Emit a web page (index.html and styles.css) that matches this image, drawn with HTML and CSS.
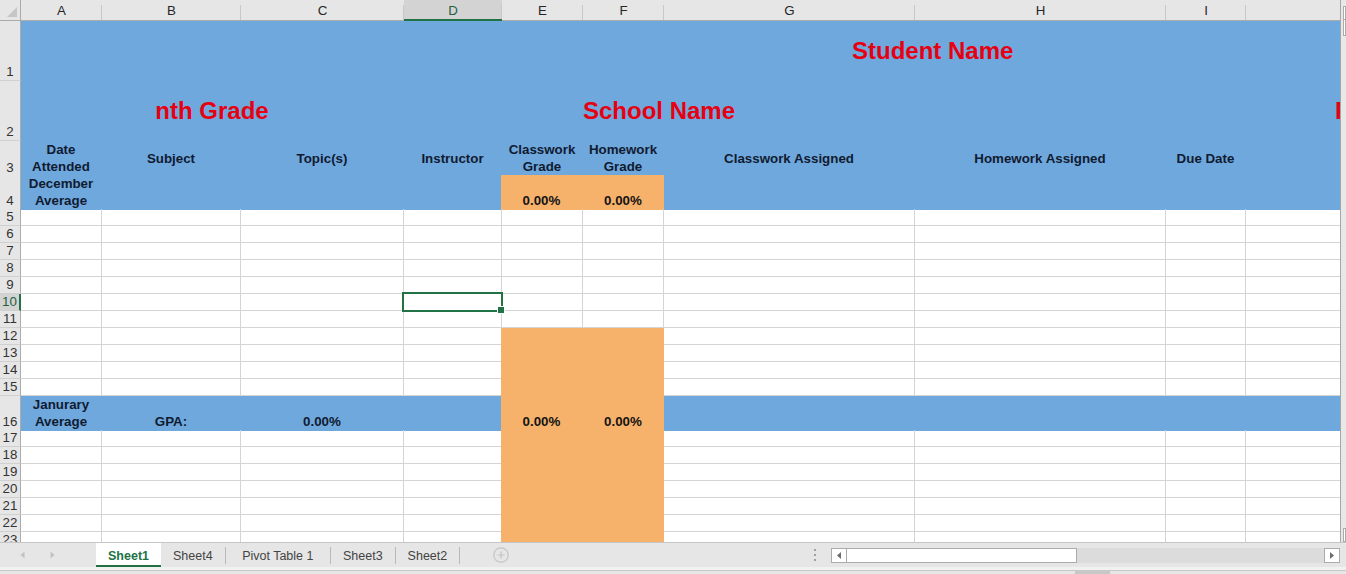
FILE: index.html
```html
<!DOCTYPE html>
<html>
<head>
<meta charset="utf-8">
<title>Sheet1</title>
<link rel="stylesheet" href="styles.css">
</head>
<body>
<div class="app">
  <div class="main">
    <div class="sheet">
      <div class="row h21">
        <div class="corner"></div>
        <div class="ch">A</div><div class="ch">B</div><div class="ch">C</div><div class="ch act">D</div><div class="ch">E</div><div class="ch">F</div><div class="ch">G</div><div class="ch">H</div><div class="ch">I</div><div class="ch"></div>
      </div>
      <div class="row h60">
        <div class="rh">1</div>
        <div class="c b all ttl pl">Student Name</div>
      </div>
      <div class="row h60">
        <div class="rh">2</div>
        <div class="c b s3 ttl">nth Grade</div>
        <div class="c b s4 ttl">School Name</div>
        <div class="c b s3 ttl pr">Period</div>
      </div>
      <div class="row h34 r3">
        <div class="rh">3</div>
        <div class="c b mid">Date Attended</div>
        <div class="c b mid">Subject</div>
        <div class="c b mid">Topic(s)</div>
        <div class="c b mid">Instructor</div>
        <div class="c b mid">Classwork Grade</div>
        <div class="c b mid">Homework Grade</div>
        <div class="c b mid">Classwork Assigned</div>
        <div class="c b mid">Homework Assigned</div>
        <div class="c b mid">Due Date</div>
        <div class="c b"></div>
      </div>
      <div class="row h34">
        <div class="rh">4</div>
        <div class="c b">December Average</div>
        <div class="c b"></div><div class="c b"></div><div class="c b"></div>
        <div class="c o oe">0.00%</div>
        <div class="c o">0.00%</div>
        <div class="c b"></div><div class="c b"></div><div class="c b"></div><div class="c b"></div>
      </div>
      <div class="row h17"><div class="rh">5</div><div class="c"></div><div class="c"></div><div class="c"></div><div class="c"></div><div class="c"></div><div class="c"></div><div class="c"></div><div class="c"></div><div class="c"></div><div class="c"></div></div>
      <div class="row h17"><div class="rh">6</div><div class="c"></div><div class="c"></div><div class="c"></div><div class="c"></div><div class="c"></div><div class="c"></div><div class="c"></div><div class="c"></div><div class="c"></div><div class="c"></div></div>
      <div class="row h17"><div class="rh">7</div><div class="c"></div><div class="c"></div><div class="c"></div><div class="c"></div><div class="c"></div><div class="c"></div><div class="c"></div><div class="c"></div><div class="c"></div><div class="c"></div></div>
      <div class="row h17"><div class="rh">8</div><div class="c"></div><div class="c"></div><div class="c"></div><div class="c"></div><div class="c"></div><div class="c"></div><div class="c"></div><div class="c"></div><div class="c"></div><div class="c"></div></div>
      <div class="row h17"><div class="rh">9</div><div class="c"></div><div class="c"></div><div class="c"></div><div class="c"></div><div class="c"></div><div class="c"></div><div class="c"></div><div class="c"></div><div class="c"></div><div class="c"></div></div>
      <div class="row h17"><div class="rh act">10</div><div class="c"></div><div class="c"></div><div class="c"></div><div class="c sel"></div><div class="c"></div><div class="c"></div><div class="c"></div><div class="c"></div><div class="c"></div><div class="c"></div></div>
      <div class="row h17"><div class="rh">11</div><div class="c"></div><div class="c"></div><div class="c"></div><div class="c"></div><div class="c"></div><div class="c"></div><div class="c"></div><div class="c"></div><div class="c"></div><div class="c"></div></div>
      <div class="row h17"><div class="rh">12</div><div class="c"></div><div class="c"></div><div class="c"></div><div class="c"></div><div class="c o oe"></div><div class="c o"></div><div class="c"></div><div class="c"></div><div class="c"></div><div class="c"></div></div>
      <div class="row h17"><div class="rh">13</div><div class="c"></div><div class="c"></div><div class="c"></div><div class="c"></div><div class="c o oe"></div><div class="c o"></div><div class="c"></div><div class="c"></div><div class="c"></div><div class="c"></div></div>
      <div class="row h17"><div class="rh">14</div><div class="c"></div><div class="c"></div><div class="c"></div><div class="c"></div><div class="c o oe"></div><div class="c o"></div><div class="c"></div><div class="c"></div><div class="c"></div><div class="c"></div></div>
      <div class="row h17"><div class="rh">15</div><div class="c"></div><div class="c"></div><div class="c"></div><div class="c"></div><div class="c o oe"></div><div class="c o"></div><div class="c"></div><div class="c"></div><div class="c"></div><div class="c"></div></div>
      <div class="row h34">
        <div class="rh">16</div>
        <div class="c b">Janurary Average</div>
        <div class="c b">GPA:</div>
        <div class="c b">0.00%</div>
        <div class="c b"></div>
        <div class="c o oe">0.00%</div>
        <div class="c o">0.00%</div>
        <div class="c b"></div><div class="c b"></div><div class="c b"></div><div class="c b"></div>
      </div>
      <div class="row h17"><div class="rh">17</div><div class="c"></div><div class="c"></div><div class="c"></div><div class="c"></div><div class="c o oe"></div><div class="c o"></div><div class="c"></div><div class="c"></div><div class="c"></div><div class="c"></div></div>
      <div class="row h17"><div class="rh">18</div><div class="c"></div><div class="c"></div><div class="c"></div><div class="c"></div><div class="c o oe"></div><div class="c o"></div><div class="c"></div><div class="c"></div><div class="c"></div><div class="c"></div></div>
      <div class="row h17"><div class="rh">19</div><div class="c"></div><div class="c"></div><div class="c"></div><div class="c"></div><div class="c o oe"></div><div class="c o"></div><div class="c"></div><div class="c"></div><div class="c"></div><div class="c"></div></div>
      <div class="row h17"><div class="rh">20</div><div class="c"></div><div class="c"></div><div class="c"></div><div class="c"></div><div class="c o oe"></div><div class="c o"></div><div class="c"></div><div class="c"></div><div class="c"></div><div class="c"></div></div>
      <div class="row h17"><div class="rh">21</div><div class="c"></div><div class="c"></div><div class="c"></div><div class="c"></div><div class="c o oe"></div><div class="c o"></div><div class="c"></div><div class="c"></div><div class="c"></div><div class="c"></div></div>
      <div class="row h17"><div class="rh">22</div><div class="c"></div><div class="c"></div><div class="c"></div><div class="c"></div><div class="c o oe"></div><div class="c o"></div><div class="c"></div><div class="c"></div><div class="c"></div><div class="c"></div></div>
      <div class="row h17"><div class="rh">23</div><div class="c"></div><div class="c"></div><div class="c"></div><div class="c"></div><div class="c o oe"></div><div class="c o"></div><div class="c"></div><div class="c"></div><div class="c"></div><div class="c"></div></div>
    </div>
    <div class="vs">
      <div class="bx"></div>
      <div class="bx tall"></div>
      <div class="fill"></div>
      <div class="bx"></div>
    </div>
  </div>
  <div class="tabbar">
    <div class="strip">
      <div class="nav">
        <svg width="5" height="8" viewBox="0 0 5 8"><path d="M4.5 0.5 L0.5 4 L4.5 7.5 Z" fill="#c2c2c2"/></svg>
        <svg class="nr" width="5" height="8" viewBox="0 0 5 8"><path d="M0.5 0.5 L4.5 4 L0.5 7.5 Z" fill="#c2c2c2"/></svg>
      </div>
      <div class="tab act">Sheet1</div>
      <div class="tab">Sheet4</div><span class="sep"></span>
      <div class="tab wide">Pivot Table 1</div><span class="sep"></span>
      <div class="tab">Sheet3</div><span class="sep"></span>
      <div class="tab">Sheet2</div><span class="sep"></span>
      <div class="add">
        <svg width="16" height="16" viewBox="0 0 16 16"><circle cx="8" cy="8" r="7.2" fill="none" stroke="#c4c4c4" stroke-width="1.2"/><path d="M8 4.5 V11.5 M4.5 8 H11.5" stroke="#c4c4c4" stroke-width="1.2"/></svg>
      </div>
      <div class="hsw">
        <div class="dots"><i></i><i></i><i></i></div>
        <div class="hs">
          <div class="btn"><svg width="4" height="7" viewBox="0 0 4 7"><path d="M4 0 L0 3.5 L4 7 Z" fill="#6d6d6d"/></svg></div>
          <div class="thumb"></div>
          <div class="track"></div>
          <div class="btn"><svg width="4" height="7" viewBox="0 0 4 7"><path d="M0 0 L4 3.5 L0 7 Z" fill="#6d6d6d"/></svg></div>
        </div>
      </div>
    </div>
    <div class="status"><div class="grip"></div></div>
  </div>
</div>
</body>
</html>
```

FILE: styles.css
```css
* { box-sizing: border-box; margin: 0; padding: 0; }
html, body { width: 1346px; height: 574px; overflow: hidden; background: #ffffff; }
body { font-family: "Liberation Sans", Arial, sans-serif; }

.app { display: flex; flex-direction: column; width: 1346px; height: 574px; }
.main { display: flex; height: 542px; flex: none; }

.sheet { width: 1341px; height: 542px; overflow: hidden; border-right: 1px solid #a6a6a6; flex: none; }

.row {
  display: grid;
  grid-template-columns: 21px 81px 139px 163px 98px 81px 81px 251px 251px 80px 300px;
  width: max-content;
}
.h21 { height: 21px; }
.h60 { height: 60px; }
.h34 { height: 34px; }
.h17 { height: 17px; }

/* column headers */
.corner { background: #e6e6e6; border-right: 1px solid #ababab; border-bottom: 1px solid #ababab; position: relative; }
.corner::after {
  content: ""; position: absolute; right: 3px; bottom: 3px;
  border-style: solid; border-width: 0 0 10px 10px;
  border-color: transparent transparent #c6c6c6 transparent;
}
.ch {
  background: #e6e6e6; border-bottom: 1px solid #ababab; position: relative;
  text-align: center; font-size: 13.33px; line-height: 17px; padding-top: 2px; color: #262626;
}
.ch::after { content: ""; position: absolute; right: 0; top: 5px; bottom: 0; width: 1px; background: #c8c8c8; }
.ch.act { background: #d3d3d3; border-bottom: 2px solid #217346; color: #24603f; }

/* row headers */
.rh {
  background: #e6e6e6; border-right: 1px solid #ababab; border-bottom: 1px solid #d0d0d0;
  display: flex; justify-content: center; align-items: flex-end;
  font-size: 13.33px; line-height: 16px; color: #333333;
}
.rh.act { background: #d3d3d3; color: #24603f; border-right: 2px solid #217346; }

/* cells */
.c {
  border-right: 1px solid #d4d4d4; border-bottom: 1px solid #d4d4d4;
  display: flex; justify-content: center; align-items: flex-end; text-align: center;
  font-weight: 700; font-size: 13.33px; line-height: 17px; color: #101b31; min-width: 0;
}
.b { background: #6fa8dc; border-color: #6fa8dc; }
.o { background: #f6b26b; border-color: #f6b26b; color: #141414; }
.oe { margin-left: -1px; }
.mid { align-items: center; padding-bottom: 1px; }
.r3 .c { border-bottom-color: #8fa8c4; }

.all { grid-column: 2 / -1; }
.s3 { grid-column: span 3; }
.s4 { grid-column: span 4; }

.ttl { font-size: 24px; line-height: 28px; color: #e60012; align-items: center; white-space: nowrap; }
.pl { justify-content: flex-start; padding-left: 831px; }
.pr { justify-content: flex-start; padding-left: 420px; }

.sel { position: relative; }
.sel::before {
  content: ""; position: absolute; left: -2px; top: -2px; right: -2px; bottom: -2px;
  border: 2px solid #217346; z-index: 3;
}
.sel::after {
  content: ""; position: absolute; right: -4px; bottom: -4px; width: 6px; height: 6px;
  background: #217346; border: 1px solid #ffffff; z-index: 4;
}

/* vertical scrollbar stub */
.vs { flex: 1; background: #e8e8e8; display: flex; flex-direction: column; padding: 6px 0 0 2px; }
.vs .bx { height: 14px; background: #ffffff; border: 1px solid #ababab; flex: none; }
.vs .bx.tall { height: 17px; margin-top: -1px; }
.vs .fill { flex: 1; }

/* sheet tabs */
.tabbar { height: 32px; flex: none; display: flex; flex-direction: column; background: #e6e6e6; border-top: 1px solid #c6c6c6; }
.strip { height: 24px; display: flex; align-items: stretch; flex: none; }
.nav { width: 96px; flex: none; display: flex; align-items: center; padding-left: 20px; }
.nav .nr { margin-left: 25px; }
.tab {
  padding: 1px 12px 0; display: flex; align-items: center; font-size: 12.5px; color: #444444;
  white-space: nowrap; flex: none;
}
.tab.wide { padding: 1px 16.5px 0; }
.tab.act { background: #ffffff; color: #217346; font-weight: 700; border-bottom: 2px solid #217346; padding-top: 3px; }
.sep { width: 1px; background: #b9b9b9; margin: 4px 0 3px; flex: none; }
.add { margin-left: 33px; display: flex; align-items: center; flex: none; }

.hsw { margin-left: auto; width: 532px; display: flex; align-items: flex-start; flex: none; }
.dots { width: 2px; margin-top: 6px; display: flex; flex-direction: column; gap: 3px; }
.dots i { display: block; width: 2px; height: 2px; background: #a0a0a0; }
.hs { margin-left: 15px; margin-top: 5px; width: 509px; height: 15px; display: flex; background: #dcdcdc; }
.hs .btn { width: 16px; height: 15px; background: #ffffff; border: 1px solid #ababab; display: flex; align-items: center; justify-content: center; flex: none; }
.hs .thumb { width: 231px; height: 15px; background: #ffffff; border: 1px solid #ababab; margin-left: -1px; flex: none; }
.hs .track { flex: 1; }

.status {
  height: 7px; flex: none;
  background: linear-gradient(#f1f1f1 0 3px, #c8c8c8 3px 4px, #e6e6e6 4px);
  display: flex; align-items: flex-end;
}
.grip { width: 35px; height: 3px; margin-left: 1075px; background: #c8c8c8; }
```
